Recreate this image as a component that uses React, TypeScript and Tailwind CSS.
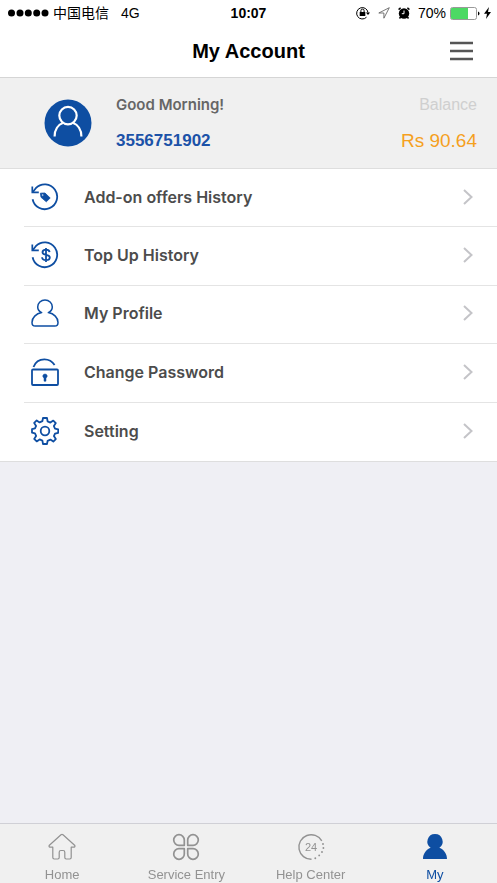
import type { ReactNode } from "react";

const menuItems = [
  { label: "Add-on offers History", icon: <OffersIcon /> },
  { label: "Top Up History", icon: <TopUpIcon /> },
  { label: "My Profile", icon: <ProfileIcon /> },
  { label: "Change Password", icon: <PasswordIcon /> },
  { label: "Setting", icon: <SettingIcon /> },
];

const tabs = [
  { label: "Home", icon: <HomeIcon />, active: false },
  { label: "Service Entry", icon: <ServiceIcon />, active: false },
  { label: "Help Center", icon: <HelpIcon />, active: false },
  { label: "My", icon: <MyIcon />, active: true },
];

function LineIcon({ children }: { children: ReactNode }) {
  return (
    <svg
      width="28"
      height="28"
      viewBox="0 0 28 28"
      fill="none"
      stroke="currentColor"
      strokeWidth="1.5"
      strokeLinejoin="round"
      aria-hidden="true"
    >
      {children}
    </svg>
  );
}

function HistoryArrow() {
  return (
    <>
      <path d="M1.6 9.2 4.8 5.2A12.4 12.4 0 1 1 1.6 16.2" strokeWidth="1.8" />
      <path d="M1.3 3.4V9.4H7.8" strokeWidth="1.7" strokeLinejoin="miter" />
    </>
  );
}

function OffersIcon() {
  return (
    <LineIcon>
      <HistoryArrow />
      <path
        d="M9.4 10.2 14 10 19.2 15 15.3 18.8 10 14.3ZM11.7 10.9a1 1 0 1 0 .01 0Z"
        fill="currentColor"
        fillRule="evenodd"
        strokeWidth="0.8"
      />
    </LineIcon>
  );
}

function TopUpIcon() {
  return (
    <LineIcon>
      <HistoryArrow />
      <path
        d="M18.6 11.2C18.3 9.4 16.9 8.7 15 8.7c-2.100 0-3.500 1-3.500 2.600 0 3.600 7.300 1.600 7.300 5.200 0 1.700-1.600 2.700-3.800 2.700-2.300 0-3.800-1-3.900-2.900M15 7v14"
        strokeWidth="1.8"
      />
    </LineIcon>
  );
}

function ProfileIcon() {
  return (
    <LineIcon>
      <path d="M10.7 13.6C8.3 12.4 6.7 10.2 6.7 7.9a7.3 6.9 0 0 1 14.6 0c0 2.300-1.600 4.500-4 5.700C23 14.700 27 18.700 27 23.400c0 2.500-1 3.600-3.200 3.600H4.200C2 27 1 25.900 1 23.400c0-4.700 4-8.700 9.700-9.800Z" />
    </LineIcon>
  );
}

function PasswordIcon() {
  return (
    <LineIcon>
      <rect x="1" y="11.5" width="26" height="15.5" rx="1" strokeWidth="1.8" />
      <path d="M2.5 9C4.2 4.4 8.5 1.3 13.4 1.3c4.200 0 7.800 1.900 10.200 5.700" strokeWidth="1.8" />
      <path
        d="M14 16a2.100 2.100 0 0 1 1 4v3.200h-2v-3.200a2.100 2.100 0 0 1 1-4Z"
        fill="currentColor"
        strokeWidth="0.5"
      />
    </LineIcon>
  );
}

function SettingIcon() {
  return (
    <LineIcon>
      <circle cx="14" cy="14" r="4.3" strokeWidth="1.8" />
      <path
        d="M12 1h4l.6 3.400 2.800 1.200 2.900-2 2.500 2.500-1.900 3 1.100 2.500 3.200.7v3.600l-3.200.7-1.100 2.500 1.900 3-2.500 2.500-2.900-2-2.800 1.200L16 27h-4l-.6-3.400-2.800-1.200-2.900 2-2.500-2.500 1.900-3L4 16.400 1 15.700v-3.600l3-.7 1.100-2.500-1.900-3 2.500-2.500 2.900 2 2.800-1.200Z"
        strokeWidth="1.8"
      />
    </LineIcon>
  );
}

function HomeIcon() {
  return (
    <LineIcon>
      <path
        d="M13 1.700q1-.8 2 0L26.600 12.200q.9 1.300-.4 2h-3v10.400q0 1.400-1.400 1.400h-3.600q-1.400 0-1.400-1.400v-5.400q0-1.700-1.700-1.700h-2.200q-1.700 0-1.700 1.700v5.400q0 1.400-1.400 1.400H6.200q-1.400 0-1.400-1.400V14.200h-3q-1.300-.7-.4-2Z"
        strokeWidth="1.2"
      />
    </LineIcon>
  );
}

function ServiceIcon() {
  return (
    <LineIcon>
      <path
        d="M12.300 12.300H7.200a5.300 5.300 0 1 1 5.100-5.200ZM15.700 12.300h5.100a5.300 5.300 0 1 0-5.100-5.200ZM12.300 15.700H7.200a5.300 5.300 0 1 0 5.100 5.200ZM15.700 15.700h5.100a5.300 5.300 0 1 1-5.100 5.200Z"
        strokeWidth="1.7"
      />
    </LineIcon>
  );
}

function HelpIcon() {
  return (
    <LineIcon>
      <path d="M24.8 7.8A12.3 12.3 0 1 0 14.5 26.3" strokeWidth="1.4" />
      <path
        d="M26 11v.01M26.4 15v.01M25 19v.01M22.2 22.400v.01M18.300 25.200v.01"
        strokeWidth="1.9"
        strokeLinecap="round"
      />
      <text
        x="14"
        y="18"
        textAnchor="middle"
        fontSize="11"
        fill="currentColor"
        stroke="none"
      >
        24
      </text>
    </LineIcon>
  );
}

function MyIcon() {
  return (
    <svg width="28" height="28" viewBox="0 0 28 28" fill="currentColor" aria-hidden="true">
      <path d="M14 1a7.600 7.600 0 0 1 4.400 13.800C23 16.700 26 21 26 26H2c0-5 3-9.300 7.600-11.200A7.600 7.600 0 0 1 14 1Z" />
    </svg>
  );
}

function StatusBar() {
  return (
    <div className="grid h-[26px] grid-cols-[1fr_auto_1fr] items-center px-1.5 text-sm text-black">
      <div className="flex items-center pl-0.5">
        <svg width="41" height="8" viewBox="0 0 41 8" aria-hidden="true">
          <circle cx="3.5" cy="4" r="3.5" />
          <circle cx="12" cy="4" r="3.5" />
          <circle cx="20.3" cy="4" r="3.5" />
          <circle cx="28.7" cy="4" r="3.5" />
          <circle cx="37" cy="4" r="3.5" />
        </svg>
        <span className="ml-1">中国电信</span>
        <span className="ml-3">4G</span>
      </div>
      <span className="font-bold">10:07</span>
      <div className="flex items-center justify-end gap-2">
        <svg width="14" height="14" viewBox="0 0 14 14" fill="none" stroke="black" aria-hidden="true">
          <path d="M10.5 11.200A5.700 5.700 0 1 1 12 6.500" />
          <path d="M9.900 6.400h4.100L12 9Z" fill="black" stroke="none" />
          <rect x="3.7" y="6" width="5.6" height="4" fill="black" stroke="none" />
          <path d="M4.900 6.500V4.700a1.600 1.600 0 0 1 3.200 0v1.800" />
        </svg>
        <svg width="12" height="12" viewBox="0 0 12 12" fill="none" stroke="#555" strokeWidth="0.8" aria-hidden="true">
          <path d="M11.300.7.8 6h5.100v5.200Z" />
        </svg>
        <svg width="12" height="12" viewBox="0 0 12 12" aria-hidden="true">
          <circle cx="6" cy="6.5" r="5.2" />
          <path d="M.6 2.600 2.600.8M11.400 2.600l-2-1.800M2.600 10 1.500 11.500M9.400 10l1.100 1.500" stroke="black" strokeWidth="1.5" />
          <path d="M6 3.500v3.200H3.800" stroke="white" fill="none" />
        </svg>
        <div className="flex items-center gap-1">
          <span>70%</span>
          <svg width="30" height="13" viewBox="0 0 30 13" aria-hidden="true">
            <rect x=".5" y=".5" width="26" height="12" rx="2" fill="white" stroke="#999" />
            <path d="M2 1h16v11H2q-1 0-1-1V2q0-1 1-1Z" fill="#4cd964" />
            <path d="M28 4.500q1.500.5 1.500 2T28 8.500Z" />
          </svg>
          <svg width="7" height="12" viewBox="0 0 7 12" aria-hidden="true">
            <path d="M5 0 0 6.800h3L2 12l5-7H4Z" />
          </svg>
        </div>
      </div>
    </div>
  );
}

export default function App() {
  return (
    <div className="flex min-h-screen flex-col bg-[#efeff4] font-['Liberation_Sans','Noto_Sans_CJK_SC',sans-serif]">
      <header className="border-b border-[#d5d5d5] bg-white">
        <StatusBar />
        <div className="grid h-[51px] grid-cols-[1fr_auto_1fr] items-center px-6 pb-0.5">
          <h1 className="col-start-2 text-xl font-bold text-black">My Account</h1>
          <button type="button" aria-label="Menu" className="justify-self-end text-[#555]">
            <svg width="23" height="20" viewBox="0 0 23 20" stroke="currentColor" strokeWidth="2.4" aria-hidden="true">
              <path d="M0 2h23M0 10h23M0 18h23" />
            </svg>
          </button>
        </div>
      </header>

      <main className="flex-1">
        {/* Account summary */}
        <section className="flex h-[91px] items-center border-b border-[#dedede] bg-[#f0f0f0] pr-5 pl-11">
          <svg width="48" height="48" viewBox="0 0 48 48" fill="none" stroke="white" strokeWidth="2.2" aria-hidden="true">
            <circle cx="24" cy="24" r="23.5" fill="#0e4ea2" stroke="none" />
            <circle cx="24" cy="16.6" r="8.7" />
            <path d="M10.6 37.400C10.600 31 14 25.600 19.300 23.700M28.700 23.700c5.300 1.900 8.700 7.300 8.700 13.700" />
          </svg>
          <div className="ml-6 flex-1">
            <p className="font-['Inter',sans-serif] text-[15px] leading-9 font-semibold text-[#666]">
              Good Morning!
            </p>
            <p className="text-[17px] leading-9 font-bold text-[#1c52a8]">3556751902</p>
          </div>
          <div className="text-right">
            <p className="text-base leading-9 text-[#cfcfcf]">Balance</p>
            <p className="text-[19px] leading-9 text-[#f5a01e]">Rs 90.64</p>
          </div>
        </section>

        <nav className="border-b border-[#dedede] bg-white pl-6">
          <ul className="grid h-[292px] auto-rows-fr divide-y divide-[#e4e4e4]">
            {menuItems.map((item) => (
              <li key={item.label}>
                <a href="#" className="flex h-full items-center pr-6 pb-0.5 pl-[7px] text-[#0e4ea2]">
                  {item.icon}
                  <span className="ml-[25px] flex-1 font-['Inter',sans-serif] text-base font-semibold text-[#4c4c4c]">
                    {item.label}
                  </span>
                  <svg width="10" height="16" viewBox="0 0 10 16" fill="none" stroke="#c4c4c8" strokeWidth="2" aria-hidden="true">
                    <path d="m1 1 7.500 7L1 15" />
                  </svg>
                </a>
              </li>
            ))}
          </ul>
        </nav>
      </main>

      {/* Bottom tab bar */}
      <nav className="sticky bottom-0 grid h-[60px] grid-cols-4 border-t border-[#d0d0d6] bg-[#f0f0f0]">
        {tabs.map((tab) => (
          <a
            key={tab.label}
            href="#"
            aria-current={tab.active ? "page" : undefined}
            className={
              "flex flex-col items-center gap-1 pt-[9px] text-[13px] leading-5 " +
              (tab.active ? "text-[#0e4ea2]" : "text-[#929292]")
            }
          >
            {tab.icon}
            {tab.label}
          </a>
        ))}
      </nav>
    </div>
  );
}
